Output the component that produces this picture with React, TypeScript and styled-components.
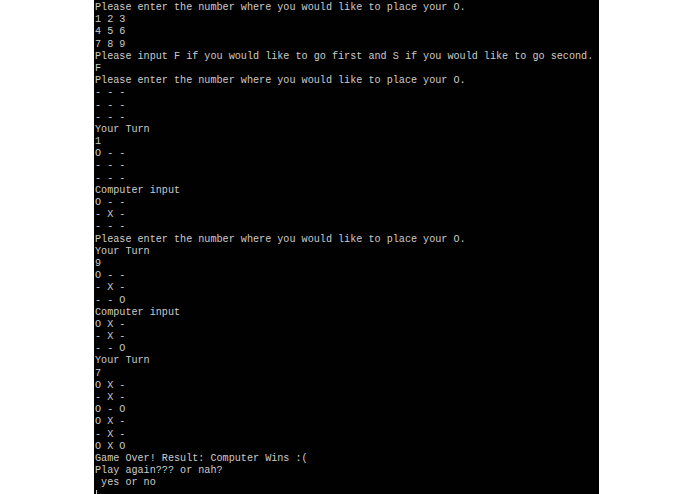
import React from "react";
import styled, { createGlobalStyle } from "styled-components";

const Global = createGlobalStyle`
  html, body { margin: 0; padding: 0; background: #ffffff; }
  #root { width: 695px; height: 494px; overflow: hidden; }
`;

const Page = styled.div`
  display: flex;
  width: 695px;
  height: 494px;
  padding-left: 94px;
  box-sizing: border-box;
`;

const Console = styled.div`
  width: 505px;
  height: 494px;
  background: #010101;
  box-sizing: border-box;
  padding: 2px 0 0 1px;
  display: flex;
  flex-direction: column;
  overflow: hidden;
`;

const Line = styled.div`
  font-family: "Liberation Mono", "DejaVu Sans Mono", monospace;
  font-size: 10.15px;
  line-height: 12.2px;
  height: 12.2px;
  flex: none;
  color: #cbcbcb;
  white-space: pre;
`;

const Cursor = styled.div`
  flex: none;
  margin-top: 0px;
  margin-left: 1px;
  width: 1px;
  height: 5px;
  background: #c8c8c8;
`;

const lines = [
  "Please enter the number where you would like to place your O.",
  "1 2 3",
  "4 5 6",
  "7 8 9",
  "Please input F if you would like to go first and S if you would like to go second.",
  "F",
  "Please enter the number where you would like to place your O.",
  "- - -",
  "- - -",
  "- - -",
  "Your Turn",
  "1",
  "O - -",
  "- - -",
  "- - -",
  "Computer input",
  "O - -",
  "- X -",
  "- - -",
  "Please enter the number where you would like to place your O.",
  "Your Turn",
  "9",
  "O - -",
  "- X -",
  "- - O",
  "Computer input",
  "O X -",
  "- X -",
  "- - O",
  "Your Turn",
  "7",
  "O X -",
  "- X -",
  "O - O",
  "O X -",
  "- X -",
  "O X O",
  "Game Over! Result: Computer Wins :(",
  "Play again??? or nah?",
  " yes or no",
];

export default function App() {
  return (
    <>
      <Global />
      <Page>
        <Console>
          {lines.map((l, i) => (
            <Line key={i}>{l}</Line>
          ))}
          <Cursor />
        </Console>
      </Page>
    </>
  );
}
